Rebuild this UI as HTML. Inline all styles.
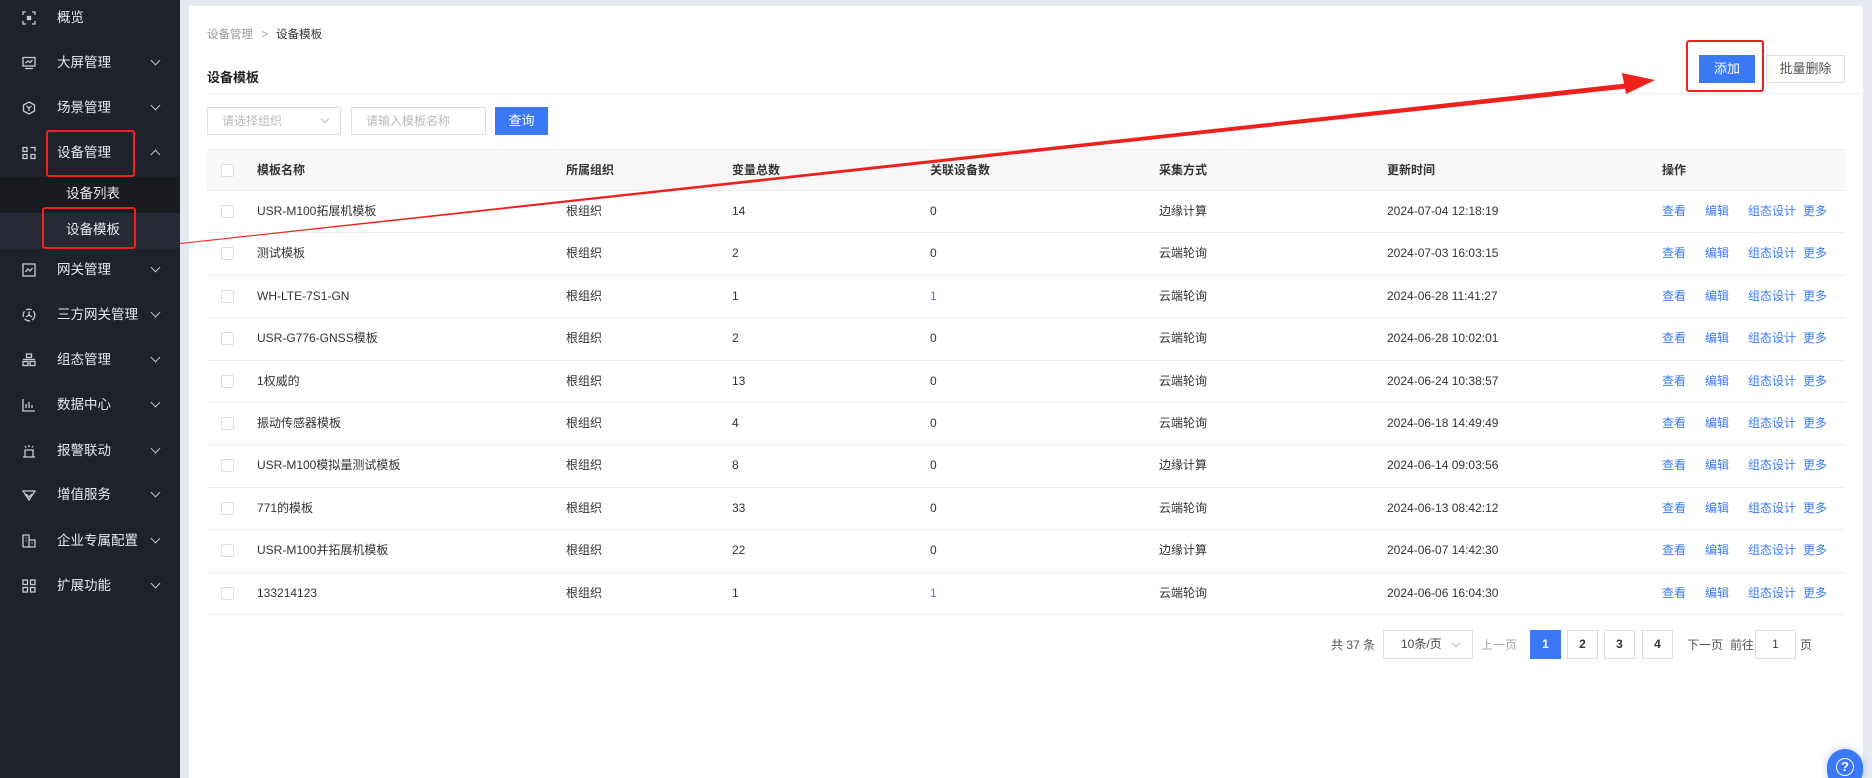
<!DOCTYPE html>
<html><head><meta charset="utf-8"><style>
*{margin:0;padding:0;box-sizing:border-box}
html,body{width:1872px;height:778px;overflow:hidden}
body{background:#e6e9f0;font-family:"Liberation Sans","Noto Sans CJK SC",sans-serif;position:relative}
.a{position:absolute;white-space:nowrap}
#side{position:absolute;left:0;top:0;width:180px;height:778px;background:#1f222b}
.mi{position:absolute;left:0;width:180px;height:20px;color:#e8e9ec;font-size:13.5px;line-height:20px}
.mi .t{position:absolute;left:57px}
.mi .ic{position:absolute;left:22px;top:3px;width:14px;height:14px}
.mi .cv{position:absolute;left:152px;top:4px;width:7px;height:7px;border-right:1.3px solid #bfc2c9;border-bottom:1.3px solid #bfc2c9;transform:rotate(45deg)}
.mi .cv.up{transform:rotate(-135deg);top:8px}
#card{position:absolute;left:189px;top:6px;width:1674px;height:772px;background:#fff}
.t12{font-size:12px;color:#333;line-height:14px}
.row{position:absolute;left:207px;width:1638px;height:42.4px;border-bottom:1px solid #ebedf2;font-size:12px;color:#333}
.row span{position:absolute;top:0;line-height:41px;white-space:nowrap}
.cb{position:absolute;left:14px;top:14px;width:13px;height:13px;border:1px solid #dcdfe6;border-radius:2px;background:#fff}
.lk{color:#3c7bf5}
.pg{position:absolute;top:630px;width:31px;height:29px;border:1px solid #dcdfe6;font-size:12px;font-weight:bold;color:#333;text-align:center;line-height:27px}
</style></head><body>
<div id="side">
 <div class="mi" style="top:8px"><svg class="ic" viewBox="0 0 14 14" fill="none" stroke="#ccc" stroke-width="1.3"><path d="M1 4V1h3M10 1h3v3M13 10v3h-3M4 13H1v-3"/><rect x="5.5" y="5.5" width="3" height="3" fill="#ccc"/></svg><span class="t">概览</span></div>
 <div class="mi" style="top:53px"><svg class="ic" viewBox="0 0 14 14" fill="none" stroke="#ccc" stroke-width="1.3"><rect x="1" y="1.5" width="12" height="8.5"/><path d="M3 12.5h8M3.5 7l2.5-2 2 1.5 2.5-2.5"/></svg><span class="t">大屏管理</span><i class="cv"></i></div>
 <div class="mi" style="top:98px"><svg class="ic" viewBox="0 0 14 14" fill="none" stroke="#ccc" stroke-width="1.3"><path d="M7 1l5.5 3v6L7 13 1.5 10V4z"/><path d="M4.5 5L7 7l2.5-2M7 7v3"/></svg><span class="t">场景管理</span><i class="cv"></i></div>
 <div class="mi" style="top:143px"><svg class="ic" viewBox="0 0 14 14" fill="none" stroke="#ccc" stroke-width="1.3"><rect x="1" y="1.5" width="4" height="4"/><rect x="1" y="8.5" width="4" height="4"/><rect x="9" y="8.5" width="4" height="4"/><path d="M8.5 1.5H13v4"/></svg><span class="t">设备管理</span><i class="cv up"></i></div>
 <div style="position:absolute;left:0;top:177px;width:180px;height:36px;background:#181a20"></div>
 <div style="position:absolute;left:0;top:213px;width:180px;height:36px;background:#262a35"></div>
 <div class="mi" style="top:184px"><span class="t" style="left:66px">设备列表</span></div>
 <div class="mi" style="top:220px"><span class="t" style="left:66px">设备模板</span></div>
 <div class="mi" style="top:260px"><svg class="ic" viewBox="0 0 14 14" fill="none" stroke="#ccc" stroke-width="1.3"><rect x="1" y="1" width="12" height="12"/><path d="M3.5 9l2.5-3 2 2 2.5-3"/></svg><span class="t">网关管理</span><i class="cv"></i></div>
 <div class="mi" style="top:305px"><svg class="ic" viewBox="0 0 14 14" fill="none" stroke="#ccc" stroke-width="1.3"><circle cx="7" cy="7" r="5.8" stroke-dasharray="6 2"/><path d="M7 3.5v3.5l-3 2M7 7l3 2"/></svg><span class="t">三方网关管理</span><i class="cv"></i></div>
 <div class="mi" style="top:350px"><svg class="ic" viewBox="0 0 14 14" fill="none" stroke="#ccc" stroke-width="1.3"><rect x="4.5" y="1" width="5" height="3.5"/><rect x="1" y="8.5" width="5" height="4"/><rect x="8" y="8.5" width="5" height="4"/><path d="M1 6.5h12"/></svg><span class="t">组态管理</span><i class="cv"></i></div>
 <div class="mi" style="top:395px"><svg class="ic" viewBox="0 0 14 14" fill="none" stroke="#ccc" stroke-width="1.3"><path d="M1 1v12h12M4 10V6M7 10V4M10 10V7"/></svg><span class="t">数据中心</span><i class="cv"></i></div>
 <div class="mi" style="top:441px"><svg class="ic" viewBox="0 0 14 14" fill="none" stroke="#ccc" stroke-width="1.3"><path d="M3 13V6h8v7M1 13h12M7 1v2M3 2l1 1.5M11 2l-1 1.5"/></svg><span class="t">报警联动</span><i class="cv"></i></div>
 <div class="mi" style="top:485px"><svg class="ic" viewBox="0 0 14 14" fill="none" stroke="#ccc" stroke-width="1.3"><path d="M1 3h12L7 12z"/><path d="M4 6l3 3 3-3"/></svg><span class="t">增值服务</span><i class="cv"></i></div>
 <div class="mi" style="top:531px"><svg class="ic" viewBox="0 0 14 14" fill="none" stroke="#ccc" stroke-width="1.3"><path d="M1 13V1h6v12M7 6h6v7H1M3.5 4h1M3.5 7h1M9.5 9h1"/></svg><span class="t">企业专属配置</span><i class="cv"></i></div>
 <div class="mi" style="top:576px"><svg class="ic" viewBox="0 0 14 14" fill="none" stroke="#ccc" stroke-width="1.3"><rect x="1" y="1" width="4.5" height="4.5"/><rect x="8.5" y="1" width="4.5" height="4.5"/><rect x="1" y="8.5" width="4.5" height="4.5"/><rect x="8.5" y="8.5" width="4.5" height="4.5"/></svg><span class="t">扩展功能</span><i class="cv"></i></div>
</div>
<div style="position:absolute;left:46px;top:130px;width:89px;height:47px;border:2px solid #f0211c;border-radius:3px"></div>
<div style="position:absolute;left:42px;top:207px;width:94px;height:42px;border:2px solid #f0211c;border-radius:3px"></div>

<div id="card"></div>
<div class="a" style="left:207px;top:26px;font-size:11.5px;color:#999">设备管理 <span style="margin:0 5px;color:#aaa">&gt;</span> <span style="color:#333">设备模板</span></div>
<div class="a" style="left:207px;top:67px;font-size:13px;font-weight:bold;color:#222">设备模板</div>
<div class="a" style="left:207px;top:93px;width:1656px;height:1px;background:#ebedf2"></div>
<div class="a" style="left:1699px;top:55px;width:56px;height:28px;background:#3b78f6;color:#fff;font-size:13px;text-align:center;line-height:28px">添加</div>
<div class="a" style="left:1766px;top:55px;width:79px;height:28px;border:1px solid #dcdfe6;color:#555;font-size:13px;text-align:center;line-height:26px">批量删除</div>
<div style="position:absolute;left:1686px;top:40px;width:78px;height:52px;border:2px solid #f0211c;border-radius:3px"></div>

<div class="a" style="left:207px;top:107px;width:134px;height:28px;border:1px solid #dcdfe6;font-size:12px;color:#bbb;line-height:26px;padding-left:14px">请选择组织<i style="position:absolute;right:12px;top:8px;width:6px;height:6px;border-right:1px solid #bbb;border-bottom:1px solid #bbb;transform:rotate(45deg)"></i></div>
<div class="a" style="left:351px;top:107px;width:135px;height:28px;border:1px solid #dcdfe6;font-size:12px;color:#bbb;line-height:26px;padding-left:14px">请输入模板名称</div>
<div class="a" style="left:495px;top:107px;width:53px;height:28px;background:#3b78f6;color:#fff;font-size:13px;text-align:center;line-height:28px">查询</div>

<div class="row" style="top:149px;background:#f8f8f9;border-top:1px solid #ebedf2;height:42px"><i class="cb"></i><span style="left:50px;font-weight:bold">模板名称</span><span style="left:359px;font-weight:bold">所属组织</span><span style="left:525px;font-weight:bold">变量总数</span><span style="left:723px;font-weight:bold">关联设备数</span><span style="left:952px;font-weight:bold">采集方式</span><span style="left:1180px;font-weight:bold">更新时间</span><span style="left:1455px;font-weight:bold">操作</span></div>

<div class="row" style="top:191px"><i class="cb"></i><span style="left:50px">USR-M100拓展机模板</span><span style="left:359px">根组织</span><span style="left:525px">14</span><span style="left:723px">0</span><span style="left:952px">边缘计算</span><span style="left:1180px">2024-07-04 12:18:19</span><span class="lk" style="left:1455px">查看</span><span class="lk" style="left:1498px">编辑</span><span class="lk" style="left:1541px">组态设计</span><span class="lk" style="left:1596px">更多</span></div>
<div class="row" style="top:233.4px"><i class="cb"></i><span style="left:50px">测试模板</span><span style="left:359px">根组织</span><span style="left:525px">2</span><span style="left:723px">0</span><span style="left:952px">云端轮询</span><span style="left:1180px">2024-07-03 16:03:15</span><span class="lk" style="left:1455px">查看</span><span class="lk" style="left:1498px">编辑</span><span class="lk" style="left:1541px">组态设计</span><span class="lk" style="left:1596px">更多</span></div>
<div class="row" style="top:275.8px"><i class="cb"></i><span style="left:50px">WH-LTE-7S1-GN</span><span style="left:359px">根组织</span><span style="left:525px">1</span><span class="lk" style="left:723px">1</span><span style="left:952px">云端轮询</span><span style="left:1180px">2024-06-28 11:41:27</span><span class="lk" style="left:1455px">查看</span><span class="lk" style="left:1498px">编辑</span><span class="lk" style="left:1541px">组态设计</span><span class="lk" style="left:1596px">更多</span></div>
<div class="row" style="top:318.2px"><i class="cb"></i><span style="left:50px">USR-G776-GNSS模板</span><span style="left:359px">根组织</span><span style="left:525px">2</span><span style="left:723px">0</span><span style="left:952px">云端轮询</span><span style="left:1180px">2024-06-28 10:02:01</span><span class="lk" style="left:1455px">查看</span><span class="lk" style="left:1498px">编辑</span><span class="lk" style="left:1541px">组态设计</span><span class="lk" style="left:1596px">更多</span></div>
<div class="row" style="top:360.6px"><i class="cb"></i><span style="left:50px">1权威的</span><span style="left:359px">根组织</span><span style="left:525px">13</span><span style="left:723px">0</span><span style="left:952px">云端轮询</span><span style="left:1180px">2024-06-24 10:38:57</span><span class="lk" style="left:1455px">查看</span><span class="lk" style="left:1498px">编辑</span><span class="lk" style="left:1541px">组态设计</span><span class="lk" style="left:1596px">更多</span></div>
<div class="row" style="top:403px"><i class="cb"></i><span style="left:50px">振动传感器模板</span><span style="left:359px">根组织</span><span style="left:525px">4</span><span style="left:723px">0</span><span style="left:952px">云端轮询</span><span style="left:1180px">2024-06-18 14:49:49</span><span class="lk" style="left:1455px">查看</span><span class="lk" style="left:1498px">编辑</span><span class="lk" style="left:1541px">组态设计</span><span class="lk" style="left:1596px">更多</span></div>
<div class="row" style="top:445.4px"><i class="cb"></i><span style="left:50px">USR-M100模拟量测试模板</span><span style="left:359px">根组织</span><span style="left:525px">8</span><span style="left:723px">0</span><span style="left:952px">边缘计算</span><span style="left:1180px">2024-06-14 09:03:56</span><span class="lk" style="left:1455px">查看</span><span class="lk" style="left:1498px">编辑</span><span class="lk" style="left:1541px">组态设计</span><span class="lk" style="left:1596px">更多</span></div>
<div class="row" style="top:487.8px"><i class="cb"></i><span style="left:50px">771的模板</span><span style="left:359px">根组织</span><span style="left:525px">33</span><span style="left:723px">0</span><span style="left:952px">云端轮询</span><span style="left:1180px">2024-06-13 08:42:12</span><span class="lk" style="left:1455px">查看</span><span class="lk" style="left:1498px">编辑</span><span class="lk" style="left:1541px">组态设计</span><span class="lk" style="left:1596px">更多</span></div>
<div class="row" style="top:530.2px"><i class="cb"></i><span style="left:50px">USR-M100并拓展机模板</span><span style="left:359px">根组织</span><span style="left:525px">22</span><span style="left:723px">0</span><span style="left:952px">边缘计算</span><span style="left:1180px">2024-06-07 14:42:30</span><span class="lk" style="left:1455px">查看</span><span class="lk" style="left:1498px">编辑</span><span class="lk" style="left:1541px">组态设计</span><span class="lk" style="left:1596px">更多</span></div>
<div class="row" style="top:572.6px"><i class="cb"></i><span style="left:50px">133214123</span><span style="left:359px">根组织</span><span style="left:525px">1</span><span class="lk" style="left:723px">1</span><span style="left:952px">云端轮询</span><span style="left:1180px">2024-06-06 16:04:30</span><span class="lk" style="left:1455px">查看</span><span class="lk" style="left:1498px">编辑</span><span class="lk" style="left:1541px">组态设计</span><span class="lk" style="left:1596px">更多</span></div>

<div class="a t12" style="left:1331px;top:638px;color:#555">共 37 条</div>
<div class="a" style="left:1383px;top:630px;width:90px;height:29px;border:1px solid #dcdfe6;font-size:12px;color:#444;line-height:27px;padding-left:17px">10条/页<i style="position:absolute;right:13px;top:9px;width:6px;height:6px;border-right:1px solid #bbb;border-bottom:1px solid #bbb;transform:rotate(45deg)"></i></div>
<div class="a t12" style="left:1481px;top:638px;color:#aaa">上一页</div>
<div class="pg" style="left:1530px;background:#3b78f6;border-color:#3b78f6;color:#fff">1</div>
<div class="pg" style="left:1567px">2</div>
<div class="pg" style="left:1604px">3</div>
<div class="pg" style="left:1642px">4</div>
<div class="a t12" style="left:1687px;top:638px;color:#555">下一页</div>
<div class="a t12" style="left:1730px;top:638px;color:#555">前往</div>
<div class="a" style="left:1755px;top:630px;width:41px;height:29px;border:1px solid #dcdfe6;font-size:12px;color:#444;text-align:center;line-height:27px">1</div>
<div class="a t12" style="left:1800px;top:638px;color:#555">页</div>

<svg style="position:absolute;left:0;top:0" width="1872" height="778"><polygon points="180,243 1630,83 1631,88 180,244" fill="#f0211c"/><polygon points="1622,73 1655,80 1626,94" fill="#f0211c"/></svg>

<div class="a" style="left:1827px;top:749px;width:36px;height:40px;border-radius:18px;background:#3b78f6;box-shadow:0 0 8px rgba(59,120,246,.4)"><div style="position:absolute;left:9px;top:9px;width:18px;height:18px;border:1.5px solid #fff;border-radius:50%;color:#fff;font-size:13px;font-weight:bold;text-align:center;line-height:16px">?</div></div>
</body></html>
